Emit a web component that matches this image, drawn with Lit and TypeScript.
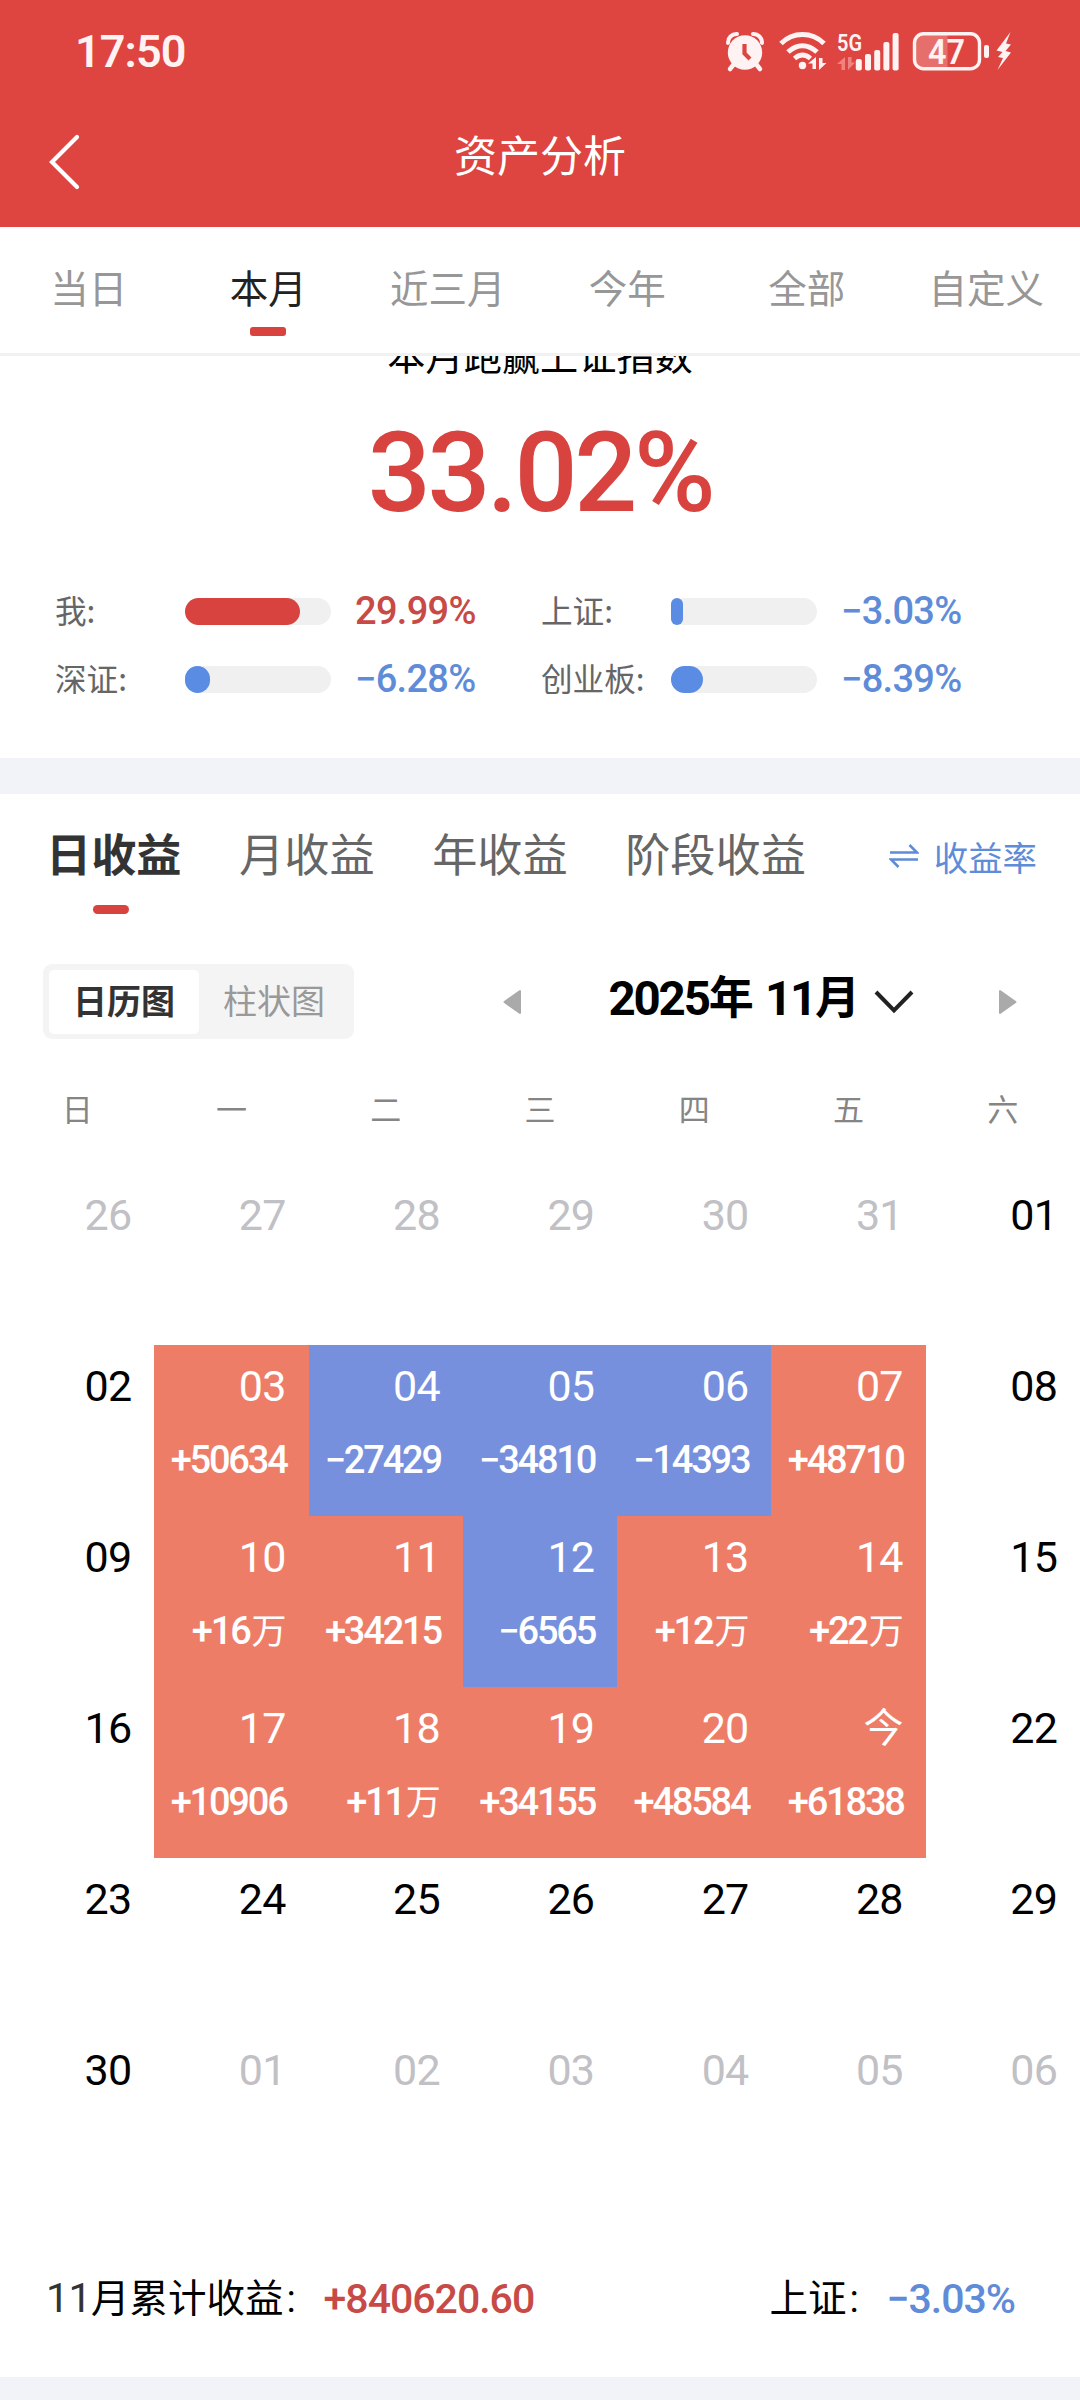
import { LitElement, html, css, svg, nothing } from "lit";
import { customElement, property } from "lit/decorators.js";
import { classMap } from "lit/directives/class-map.js";
import { styleMap } from "lit/directives/style-map.js";

type Tone = "up" | "down";

interface Benchmark {
  label: string;
  value: string;
  tone: Tone;
  width: number;
}

interface Day {
  day: string;
  amount?: string;
  unit?: string;
  tone?: Tone;
  outside?: boolean;
  today?: boolean;
}

const RANGES = ["当日", "本月", "近三月", "今年", "全部", "自定义"];

const BENCHMARKS: Benchmark[] = [
  { label: "我:", value: "29.99%", tone: "up", width: 115 },
  { label: "上证:", value: "−3.03%", tone: "down", width: 12 },
  { label: "深证:", value: "−6.28%", tone: "down", width: 25 },
  { label: "创业板:", value: "−8.39%", tone: "down", width: 32 },
];

const PERIODS = ["日收益", "月收益", "年收益", "阶段收益"];
const WEEKDAYS = ["日", "一", "二", "三", "四", "五", "六"];

const out = (day: string): Day => ({ day, outside: true });
const idle = (day: string): Day => ({ day });
const up = (day: string, amount: string, unit = ""): Day => ({ day, amount, unit, tone: "up" });
const down = (day: string, amount: string): Day => ({ day, amount, tone: "down" });

const DAYS: Day[] = [
  out("26"), out("27"), out("28"), out("29"), out("30"), out("31"), idle("01"),
  idle("02"), up("03", "+50634"), down("04", "−27429"), down("05", "−34810"), down("06", "−14393"), up("07", "+48710"), idle("08"),
  idle("09"), up("10", "+16", "万"), up("11", "+34215"), down("12", "−6565"), up("13", "+12", "万"), up("14", "+22", "万"), idle("15"),
  idle("16"), up("17", "+10906"), up("18", "+11", "万"), up("19", "+34155"), up("20", "+48584"), { ...up("今", "+61838"), today: true }, idle("22"),
  idle("23"), idle("24"), idle("25"), idle("26"), idle("27"), idle("28"), idle("29"),
  idle("30"), out("01"), out("02"), out("03"), out("04"), out("05"), out("06"),
];

@customElement("status-bar")
class StatusBar extends LitElement {
  static styles = css`
    :host {
      display: flex;
      align-items: center;
      justify-content: space-between;
      height: 102px;
      padding: 0 68px 0 75px;
      box-sizing: border-box;
      color: #fff2f2;
      font-family: Roboto, "Noto Sans CJK SC", sans-serif;
    }
    .time {
      padding-top: 2px;
      font-size: 45px;
      line-height: 50px;
      font-weight: 600;
      letter-spacing: -0.9px;
    }
    .icons {
      display: flex;
      align-items: center;
      height: 40px;
    }
    svg {
      display: block;
      flex: none;
      overflow: visible;
    }
    .alarm { margin-right: 15px; }
    .wifi { margin-right: 10px; }
    .signal { margin-right: 13px; }
    .battery { margin-right: 6px; }
    .net { font: 600 24px Roboto, sans-serif; }
    .charge { font: 600 35px Roboto, sans-serif; }
  `;

  render() {
    return html`
      <span class="time">17:50</span>
      <div class="icons">
        <svg class="alarm" width="38" height="40" viewBox="0 0 38 40" fill="none" stroke="#fff2f2">
          <path d="M2 12A8.5 8.5 0 0 1 11 3M27 3A8.5 8.5 0 0 1 36 12" stroke-width="4" stroke-linecap="round" />
          <path d="M8 33l-4 5M30 33l4 5" stroke-width="4.5" stroke-linecap="round" />
          <circle cx="19" cy="21.5" r="17.2" fill="#fff2f2" stroke="none" />
          <path d="M18.500 13v9.500l5.500 5.500" stroke="#de4440" stroke-width="4.2" />
        </svg>
        <svg class="wifi" width="48" height="40" viewBox="0 0 48 40" fill="none" stroke="#fff2f2">
          <path d="M2 12.5C14 0.5 33 0.5 45 12.5" stroke-width="5" />
          <path d="M9 21C18 12.5 29 12.5 38 21" stroke-width="5" />
          <path d="M15.5 27.5Q23.5 20.500 31.5 27.5" stroke-width="4.800" />
          <circle cx="23.5" cy="34.5" r="3.7" fill="#fff2f2" stroke="none" />
          <path d="M37 26v12h-3.5v-5.5h-4.5zM40 39v-12h3.5v5h4z" fill="#fff2f2" stroke="none" />
        </svg>
        <svg class="signal" width="62" height="40" viewBox="0 0 62 40">
          <text class="net" x="0" y="20" textLength="25" lengthAdjust="spacingAndGlyphs" fill="#fff2f2">5G</text>
          <path d="M8 26v13H4.500v-6H0zM11 39v-13h3.500v5.500H18z" fill="#ef8380" />
          ${[28, 23, 19, 11, 2].map(
            (top, i) => svg`<rect x=${18.8 + i * 9.2} y=${top} width="6" height=${39 - top + 0.5} rx="2" fill="#fff2f2" />`,
          )}
        </svg>
        <svg class="battery" width="78" height="40" viewBox="0 0 78 40">
          <path d="M35.5 3H12a9 9 0 0 0-9 9v16a9 9 0 0 0 9 9h23.5z" fill="#e66e6b" />
          <rect x="2.5" y="2.8" width="65" height="35" rx="9" fill="none" stroke="#fff2f2" stroke-width="3.4" />
          <rect x="72" y="14" width="5" height="13" rx="2" fill="#fff2f2" />
          <text class="charge" x="16" y="32.500" textLength="37" lengthAdjust="spacingAndGlyphs" fill="#fff2f2">47</text>
        </svg>
        <svg width="16" height="40" viewBox="0 0 16 40">
          <path d="M14.5 1L0.5 19.5l6 1.5L2 26l5 1L1.5 39L15 21.5l-5.5-1.5L15 13.5l-5-1z" fill="#fff2f2" />
        </svg>
      </div>
    `;
  }
}

@customElement("benchmark-row")
class BenchmarkRow extends LitElement {
  @property({ attribute: false }) item!: Benchmark;

  static styles = css`
    :host {
      display: flex;
      align-items: center;
      height: 40px;
    }
    .label {
      width: 130px;
      padding-bottom: 6px;
      font-size: 31.6px;
      line-height: 40px;
      color: #666;
      white-space: nowrap;
    }
    .track {
      width: 146px;
      height: 27px;
      border-radius: 13.5px;
      background: #f0f0f0;
    }
    .fill {
      height: 27px;
      border-radius: 13.5px;
    }
    .fill.up { background: #d8433f; }
    .fill.down { background: #5a8ce4; }
    .value {
      margin-left: 24px;
      padding-bottom: 2px;
      font: 500 38px/40px Roboto, sans-serif;
      letter-spacing: -0.7px;
    }
    .value.up { color: #c84a46; }
    .value.down { color: #5f8cd8; }
  `;

  render() {
    const { label, value, tone, width } = this.item;
    return html`
      <span class="label">${label}</span>
      <div class="track"><div class="fill ${tone}" style=${styleMap({ width: `${width}px` })}></div></div>
      <span class="value ${tone}">${value}</span>
    `;
  }
}

@customElement("profit-calendar")
class ProfitCalendar extends LitElement {
  static styles = css`
    :host { display: block; }
    .weekdays,
    .grid {
      display: grid;
      grid-template-columns: repeat(7, 1fr);
    }
    .weekdays {
      margin-bottom: 46px;
      font-size: 31px;
      line-height: 40px;
      text-align: center;
      color: #858585;
    }
    .grid { grid-auto-rows: 171px; }
    .cell {
      display: flex;
      flex-direction: column;
      align-items: flex-end;
      gap: 28px;
      padding: 17px 23px 0 0;
      color: #000;
      font-family: Roboto, "Noto Sans CJK SC", sans-serif;
    }
    .cell.outside { color: #c0c0c5; }
    .cell.up { background: #ee7d68; color: #fff; }
    .cell.down { background: #7690de; color: #fff; }
    .day {
      font-size: 43px;
      line-height: 48px;
      letter-spacing: -0.8px;
    }
    .day.today {
      height: 47px;
      padding-top: 1px;
      font-size: 40px;
    }
    .amount {
      margin-right: -1px;
      font-size: 38px;
      line-height: 44px;
      font-weight: 500;
      letter-spacing: -2.2px;
      white-space: nowrap;
    }
    .unit {
      margin-left: 2px;
      font-size: 35px;
      font-weight: 400;
      letter-spacing: 0;
    }
  `;

  render() {
    return html`
      <div class="weekdays">${WEEKDAYS.map((name) => html`<span>${name}</span>`)}</div>
      <div class="grid">
        ${DAYS.map(
          (d) => html`
            <div class=${classMap({ cell: true, outside: !!d.outside, up: d.tone === "up", down: d.tone === "down" })}>
              <span class=${classMap({ day: true, today: !!d.today })}>${d.day}</span>
              ${d.amount
                ? html`<span class="amount">${d.amount}${d.unit ? html`<span class="unit">${d.unit}</span>` : nothing}</span>`
                : nothing}
            </div>
          `,
        )}
      </div>
    `;
  }
}

@customElement("app-root")
class AppRoot extends LitElement {
  static styles = css`
    :host {
      display: block;
      width: 1080px;
      height: 2400px;
      overflow: hidden;
      background: #f2f3f8;
      font-family: "Noto Sans CJK SC", sans-serif;
    }
    svg { display: block; flex: none; }
    .top {
      height: 227px;
      background: #de4440;
    }
    .nav {
      display: grid;
      grid-template-columns: 100px 1fr 100px;
      color: #fff;
    }
    .back { margin: 31px 0 0 48px; }
    .title {
      margin-top: 21px;
      text-align: center;
      font-size: 43px;
      line-height: 60px;
    }
    .ranges {
      display: grid;
      grid-template-columns: repeat(6, 1fr);
      height: 126px;
      padding-right: 3px;
      border-bottom: 3px solid #f1f1f1;
      background: #fff;
    }
    .range {
      display: flex;
      flex-direction: column;
      align-items: center;
      gap: 13px;
      padding: 31px 2px 0 0;
      font-size: 38.5px;
      line-height: 56px;
      color: #979797;
    }
    .range.on { color: #222; }
    .mark {
      width: 36px;
      height: 9px;
      border-radius: 3px;
      background: #d8433f;
    }
    .summary {
      display: flow-root;
      height: 402px;
      overflow: hidden;
      background: #fff;
    }
    .headline {
      margin-top: -30.5px;
      text-align: center;
      font-size: 38.2px;
      font-weight: 400;
      line-height: 56px;
      color: #000;
    }
    .beat {
      margin-top: 31.5px;
      text-align: center;
      font: 500 111px/120px Roboto, sans-serif;
      letter-spacing: -3.4px;
      color: #d8433f;
    }
    .benchmarks {
      display: grid;
      grid-template-columns: 486px 486px;
      row-gap: 28px;
      padding: 58.5px 0 0 55px;
    }
    .profit {
      display: flow-root;
      height: 1583px;
      margin-top: 36px;
      background: #fff;
    }
    .periods {
      display: flex;
      align-items: flex-start;
      gap: 57.5px;
      height: 120px;
      padding: 29px 43px 0 46px;
      box-sizing: border-box;
      font-size: 45.2px;
      line-height: 60px;
      color: #666;
    }
    .period {
      display: flex;
      flex-direction: column;
      align-items: center;
      gap: 22px;
    }
    .period.on { font-weight: 700; color: #333; }
    .period .mark { margin-right: 6px; border-radius: 4.5px; }
    .rate {
      display: flex;
      align-items: center;
      gap: 15px;
      margin-left: auto;
      padding-top: 2.5px;
      font-size: 34.4px;
      color: #5f8cd8;
    }
    .tools {
      display: flex;
      align-items: center;
      height: 75px;
      margin: 50px 0 49px;
      padding: 0 63px 0 43px;
    }
    .switch {
      display: flex;
      width: 311px;
      height: 75px;
      padding: 6px 5px 5px 6px;
      box-sizing: border-box;
      border-radius: 9px;
      background: #f4f4f4;
      font-size: 34px;
      line-height: 59px;
      text-align: center;
      color: #999;
    }
    .option { width: 150px; height: 64px; }
    .option.on {
      border-radius: 5px;
      background: #fff;
      font-weight: 600;
      color: #333;
    }
    .prev { margin-left: 149px; }
    .month {
      display: flex;
      align-items: center;
      margin-left: auto;
      padding-bottom: 5px;
      font: 700 45px/60px Roboto, "Noto Sans CJK SC", sans-serif;
      color: #000;
      white-space: pre;
    }
    .num { font-size: 47.5px; letter-spacing: -2.2px; }
    .chevron { margin: 2px 85px 0 14px; }
    .totals {
      display: flex;
      align-items: center;
      margin-top: 68px;
      padding: 0 65px 0 46px;
      font-family: Roboto, "Noto Sans CJK SC", sans-serif;
      font-size: 38.5px;
      line-height: 60px;
      color: #000;
    }
    .count { font-size: 41px; color: #333; letter-spacing: -0.5px; }
    .colon {
      display: inline-block;
      width: 40px;
      padding-left: 3px;
      box-sizing: border-box;
    }
    .sum {
      font-size: 41px;
      font-weight: 500;
      letter-spacing: -1px;
    }
    .sum.up { color: #c84a46; }
    .sum.down { color: #5f8cd8; }
    .index { margin-left: auto; }
  `;

  render() {
    return html`
      <header class="top">
        <status-bar></status-bar>
        <nav class="nav">
          <svg class="back" width="32" height="58" viewBox="0 0 32 58" fill="none" stroke="#fff" stroke-width="4.2" stroke-linecap="round">
            <path d="M29 4L4 29L29 54" />
          </svg>
          <span class="title">资产分析</span>
        </nav>
      </header>

      <div class="ranges">
        ${RANGES.map(
          (name, i) => html`
            <div class=${classMap({ range: true, on: i === 1 })}>
              <span>${name}</span>${i === 1 ? html`<i class="mark"></i>` : nothing}
            </div>
          `,
        )}
      </div>

      <section class="summary">
        <div class="headline">本月跑赢上证指数</div>
        <div class="beat">33.02%</div>
        <div class="benchmarks">
          ${BENCHMARKS.map((item) => html`<benchmark-row .item=${item}></benchmark-row>`)}
        </div>
      </section>

      <section class="profit">
        <div class="periods">
          ${PERIODS.map(
            (name, i) => html`
              <div class=${classMap({ period: true, on: i === 0 })}>
                <span>${name}</span>${i === 0 ? html`<i class="mark"></i>` : nothing}
              </div>
            `,
          )}
          <div class="rate">
            <svg width="30" height="24" viewBox="0 0 30 24" fill="none" stroke="#5f8cd8" stroke-width="2.6">
              <path d="M1 8.5H28L20.5 1M29 15.5H2L9.5 23" />
            </svg>
            <span>收益率</span>
          </div>
        </div>

        <div class="tools">
          <div class="switch">
            <span class="option on">日历图</span>
            <span class="option">柱状图</span>
          </div>
          <svg class="prev" width="18" height="26" viewBox="0 0 18 26">
            <path d="M17 2V24L1.5 13Z" fill="#aaa" stroke="#aaa" stroke-width="2" stroke-linejoin="round" />
          </svg>
          <div class="month"><span class="num">2025</span>年 <span class="num">11</span>月</div>
          <svg class="chevron" width="40" height="26" viewBox="0 0 40 26" fill="none" stroke="#222" stroke-width="4">
            <path d="M2 2L20 20.5L38 2" />
          </svg>
          <svg width="18" height="26" viewBox="0 0 18 26">
            <path d="M1 2V24L16.5 13Z" fill="#aaa" stroke="#aaa" stroke-width="2" stroke-linejoin="round" />
          </svg>
        </div>

        <profit-calendar></profit-calendar>

        <div class="totals">
          <span><span class="count">11</span>月累计收益<span class="colon">:</span></span>
          <span class="sum up">+840620.60</span>
          <span class="index">上证<span class="colon">:</span></span>
          <span class="sum down">−3.03%</span>
        </div>
      </section>
    `;
  }
}
